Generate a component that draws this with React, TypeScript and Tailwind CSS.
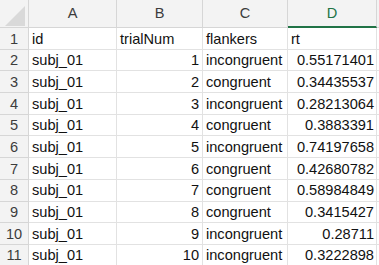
import React from "react";

type Row = { id: string; trial: number; flankers: string; rt: string };

const rows: Row[] = [
  { id: "subj_01", trial: 1, flankers: "incongruent", rt: "0.55171401" },
  { id: "subj_01", trial: 2, flankers: "congruent", rt: "0.34435537" },
  { id: "subj_01", trial: 3, flankers: "incongruent", rt: "0.28213064" },
  { id: "subj_01", trial: 4, flankers: "congruent", rt: "0.3883391" },
  { id: "subj_01", trial: 5, flankers: "incongruent", rt: "0.74197658" },
  { id: "subj_01", trial: 6, flankers: "congruent", rt: "0.42680782" },
  { id: "subj_01", trial: 7, flankers: "congruent", rt: "0.58984849" },
  { id: "subj_01", trial: 8, flankers: "congruent", rt: "0.3415427" },
  { id: "subj_01", trial: 9, flankers: "incongruent", rt: "0.28711" },
  { id: "subj_01", trial: 10, flankers: "incongruent", rt: "0.3222898" },
];

const colHead =
  "flex items-center justify-center bg-[#f3f3f3] border-r border-b border-[#d6d6d6] text-[#3c3c3c]";
const rowHead =
  "flex items-center justify-center pt-[1px] bg-[#f3f3f3] border-r border-b border-[#d6d6d6] text-[#3c3c3c]";
const cell =
  "flex items-center pt-[1px] border-r border-b border-[#e2e2e2] text-[#111] whitespace-nowrap overflow-hidden";

export default function App() {
  return (
    <div className="w-[379px] h-[265px] overflow-hidden bg-white font-['Liberation_Sans',Arial,sans-serif] text-[14.6px] leading-none">
      <div className="grid grid-cols-[29px_88px_86px_85px_89px_40px] grid-rows-[28px_repeat(12,21.7px)]">
        {/* corner */}
        <div className="relative bg-[#f3f3f3] border-r border-b border-[#d6d6d6]">
          <svg className="absolute left-[5px] top-[6px]" width="20" height="20" viewBox="0 0 20 20">
            <polygon points="20,0 20,20 0,20" fill="#d9d9d9" />
          </svg>
        </div>
        <div className={colHead}>A</div>
        <div className={colHead}>B</div>
        <div className={colHead}>C</div>
        <div className="flex items-center justify-center bg-[#f3f3f3] border-r border-[#d6d6d6] border-b-2 border-b-[#217346] text-[#217346]">
          D
        </div>
        <div className={colHead}></div>

        {/* header row of the data */}
        <div className={rowHead}>1</div>
        <div className={`${cell} pl-[3px]`}>id</div>
        <div className={`${cell} pl-[3px]`}>trialNum</div>
        <div className={`${cell} pl-[3px]`}>flankers</div>
        <div className={`${cell} pl-[3px]`}>rt</div>
        <div className={cell}></div>

        {rows.map((r, i) => (
          <React.Fragment key={i}>
            <div className={rowHead}>{i + 2}</div>
            <div className={`${cell} pl-[3px]`}>{r.id}</div>
            <div className={`${cell} justify-end pr-[3px]`}>{r.trial}</div>
            <div className={`${cell} pl-[3px]`}>{r.flankers}</div>
            <div className={`${cell} justify-end pr-[2px]`}>{r.rt}</div>
            <div className={cell}></div>
          </React.Fragment>
        ))}
      </div>
    </div>
  );
}
